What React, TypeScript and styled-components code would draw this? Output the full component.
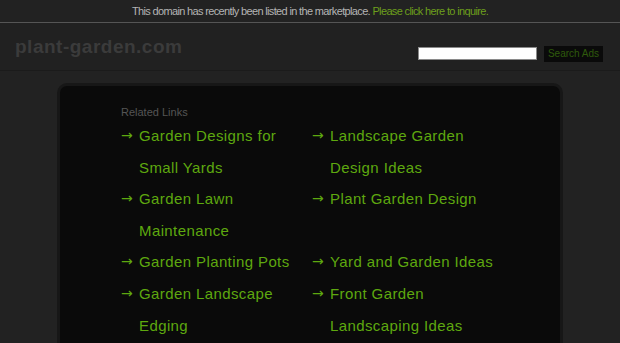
import React from 'react';
import styled, { createGlobalStyle } from 'styled-components';

const GlobalStyle = createGlobalStyle`
    html, body {
        margin: 0;
        padding: 0;
        background-color: #222222;
        font-family: "Liberation Sans", Arial, sans-serif;
    }
`;

const links: string[] = [
    'Garden Designs for Small Yards',
    'Landscape Garden Design Ideas',
    'Garden Lawn Maintenance',
    'Plant Garden Design',
    'Garden Planting Pots',
    'Yard and Garden Ideas',
    'Garden Landscape Edging',
    'Front Garden Landscaping Ideas',
];

const App = () => {
    return (
        <>
            <GlobalStyle />
            <Notice>
                This domain has recently been listed in the marketplace.{' '}
                <NoticeLink href="#">Please click here to inquire.</NoticeLink>
            </Notice>
            <Header>
                <Logo>plant-garden.com</Logo>
                <SearchForm onSubmit={(e) => e.preventDefault()}>
                    <SearchInput type="text" />
                    <SearchButton type="submit">Search Ads</SearchButton>
                </SearchForm>
            </Header>
            <Main>
                <Panel>
                    <Heading>Related Links</Heading>
                    <LinkGrid>
                        {links.map((label) => (
                            <LinkItem key={label}>
                                <Arrow>→</Arrow>
                                <LinkText href="#">{label}</LinkText>
                            </LinkItem>
                        ))}
                    </LinkGrid>
                </Panel>
            </Main>
        </>
    );
};

export default App;

const Notice = styled.div`
    height: 22px;
    line-height: 22px;
    text-align: center;
    font-size: 11px;
    letter-spacing: -0.65px;
    color: #b4b4b4;
    background-color: #222222;
    border-bottom: 1px solid #555555;
`;

const NoticeLink = styled.a`
    color: #6d9f1c;
    text-decoration: none;
`;

const Header = styled.div`
    display: flex;
    justify-content: space-between;
    align-items: center;
    height: 47px;
    padding: 0 17px 0 15px;
    background-color: #212121;
    border-bottom: 1px solid #1b1b1b;
`;

const Logo = styled.div`
    font-size: 19px;
    font-weight: bold;
    letter-spacing: 0.5px;
    color: #3b3b3b;
`;

const SearchForm = styled.form`
    display: flex;
    align-items: center;
    gap: 7px;
    margin-top: 14px;
`;

const SearchInput = styled.input`
    box-sizing: border-box;
    width: 119px;
    height: 13px;
    padding: 0;
    border: 1px solid #8a8a8a;
    background-color: #ffffff;
`;

const SearchButton = styled.button`
    box-sizing: border-box;
    width: 59px;
    height: 16px;
    padding: 0;
    border: none;
    background-color: #0a0a0a;
    color: #2f5a0c;
    font-family: "Liberation Sans", Arial, sans-serif;
    font-size: 10px;
`;

const Main = styled.div`
    padding-top: 12px;
`;

const Panel = styled.div`
    width: 506px;
    min-height: 300px;
    margin: 0 auto;
    padding: 19px 0 0 61px;
    box-sizing: border-box;
    background-color: #0a0a0a;
    border: 3px solid #171717;
    border-radius: 10px;
`;

const Heading = styled.div`
    font-size: 11px;
    color: #555555;
    line-height: 14px;
    margin-bottom: 1px;
`;

const LinkGrid = styled.div`
    display: grid;
    grid-template-columns: 191px 191px;
`;

const LinkItem = styled.div`
    display: flex;
    line-height: 31.6px;
    font-size: 15px;
    color: #5ea80f;
`;

const Arrow = styled.span`
    flex: 0 0 18px;
    font-family: "DejaVu Sans", sans-serif;
    font-size: 14px;
`;

const LinkText = styled.a`
    width: 170px;
    color: #5ea80f;
    text-decoration: none;
    letter-spacing: 0.4px;
`;
